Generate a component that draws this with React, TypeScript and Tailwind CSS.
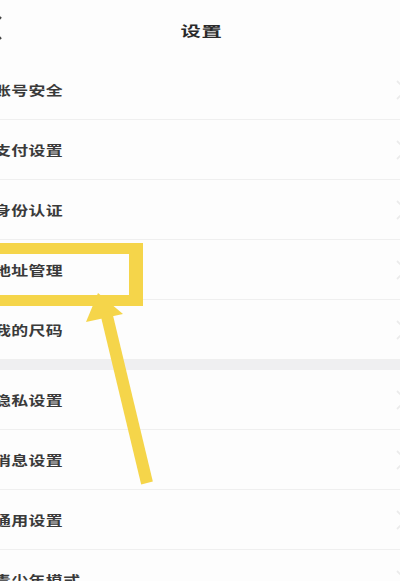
import React from "react";

const groupA = ["账号安全", "支付设置", "身份认证", "地址管理", "我的尺码"];
const groupB = ["隐私设置", "消息设置", "通用设置", "青少年模式"];

function Row({ label }: { label: string }) {
  return (
    <div className="h-[60px] flex items-center justify-between border-b border-[#efefef] bg-[#fdfdfd]">
      <span className="ml-[-6px] text-[13px] leading-none font-bold text-[#3a3a3a] tracking-[0.3px] origin-left scale-x-[1.3] whitespace-nowrap">
        {label}
      </span>
      <svg width="14" height="22" viewBox="0 0 14 22" className="mr-[-9px]">
        <path d="M2 2 L11 11 L2 20" fill="none" stroke="#ebebeb" strokeWidth="1.8" />
      </svg>
    </div>
  );
}

export default function App() {
  return (
    <div
      className="relative w-[400px] h-[581px] overflow-hidden bg-[#fdfdfd]"
      style={{ fontFamily: '"Noto Sans CJK SC", "Noto Sans", sans-serif' }}
    >
      <div className="relative h-[60px] flex items-center justify-center">
        <svg width="14" height="26" viewBox="0 0 14 26" className="absolute left-[-11px] top-[15px]">
          <path d="M12 2 L2 13 L12 24" fill="none" stroke="#444444" strokeWidth="2.2" />
        </svg>
        <span className="ml-[2px] text-[14px] leading-none font-bold text-[#2a2a2a] tracking-[0.5px] scale-x-[1.45]">
          设置
        </span>
      </div>
      <div className="flex flex-col">
        {groupA.map((l) => (
          <Row key={l} label={l} />
        ))}
      </div>
      <div className="h-[10px] bg-[#efeff1]" />
      <div className="flex flex-col">
        {groupB.map((l) => (
          <Row key={l} label={l} />
        ))}
      </div>

      {/* annotation overlay */}
      <div className="absolute left-[-20px] top-[243px] w-[163px] h-[63px] border-y-[11px] border-l-[11px] border-r-[14px] border-[#f5d54a]" />
      <svg className="absolute left-0 top-0 pointer-events-none" width="400" height="581" viewBox="0 0 400 581">
        <polygon points="98,293 86,322 123,314" fill="#f5d54a" />
        <line x1="106" y1="312" x2="147" y2="483" stroke="#f5d54a" strokeWidth="12" />
      </svg>
    </div>
  );
}
